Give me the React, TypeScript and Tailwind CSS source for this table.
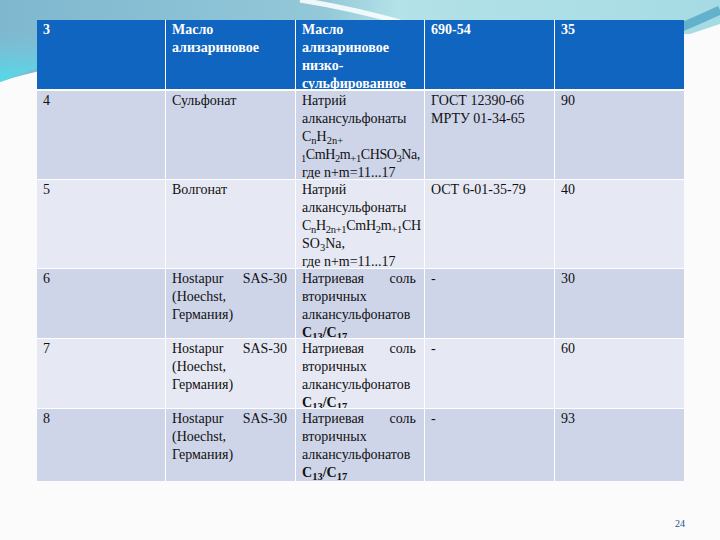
import React from "react";

const serif = { fontFamily: '"Liberation Serif", "Times New Roman", serif' };

const ODD = "bg-[#ced5e9]";
const EVEN = "bg-[#e6e9f3]";

const Cell = ({ children, className = "" }: { children?: React.ReactNode; className?: string }) => (
  <div className={`overflow-hidden pl-[6px] pr-[8px] pt-[1px] whitespace-nowrap ${className}`} style={serif}>
    {children}
  </div>
);

// line spread across the cell, like justified text
const Spread = ({ a, b }: { a: React.ReactNode; b: React.ReactNode }) => (
  <div className="flex justify-between">
    <span>{a}</span>
    <span>{b}</span>
  </div>
);

const hostapur = (
  <>
    <Spread a="Hostapur" b="SAS-30" />
    <div>(Hoechst,</div>
    <div>Германия)</div>
  </>
);

const salt = (
  <>
    <Spread a="Натриевая" b="соль" />
    <div>вторичных</div>
    <div>алкансульфонатов</div>
    <div className="font-bold">
      C<sub>13</sub>/C<sub>17</sub>
    </div>
  </>
);

const rows = [
  {
    h: "h-[89px]",
    bg: ODD,
    cells: [
      "4",
      "Сульфонат",
      <>
        <div>Натрий</div>
        <div>алкансульфонаты</div>
        <div>
          C<sub>n</sub>H<sub>2n+</sub>
        </div>
        <div className="tracking-[-0.4px] -ml-px">
          <sub>1</sub>CmH<sub>2</sub>m<sub>+1</sub>CHSO<sub>3</sub>Na,
        </div>
        <div>где n+m=11...17</div>
      </>,
      <>
        <div>ГОСТ 12390-66</div>
        <div>МРТУ 01-34-65</div>
      </>,
      "90",
    ],
  },
  {
    h: "h-[89px]",
    bg: EVEN,
    cells: [
      "5",
      "Волгонат",
      <>
        <div>Натрий</div>
        <div>алкансульфонаты</div>
        <div className="tracking-[-0.3px]">
          C<sub>n</sub>H<sub>2n+1</sub>CmH<sub>2</sub>m<sub>+1</sub>CH
        </div>
        <div>
          SO<sub>3</sub>Na,
        </div>
        <div>где n+m=11...17</div>
      </>,
      "ОСТ 6-01-35-79",
      "40",
    ],
  },
  { h: "h-[70px]", bg: ODD, cells: ["6", hostapur, salt, "-", "30"] },
  { h: "h-[70px]", bg: EVEN, cells: ["7", hostapur, salt, "-", "60"] },
  { h: "h-[72px]", bg: ODD, cells: ["8", hostapur, salt, "-", "93"] },
];

const cols = "grid grid-cols-[128px_129px_128px_129px_129px] gap-x-px";

export default function App() {
  return (
    <div className="relative w-[720px] h-[540px] overflow-hidden bg-[#fbfbfb]" style={serif}>
      <svg className="absolute inset-0" width="720" height="540" viewBox="0 0 720 540">
        <defs>
          <linearGradient id="band" x1="0" y1="0" x2="1" y2="0">
            <stop offset="0" stopColor="#7fb7cf" />
            <stop offset="0.45" stopColor="#93c8d8" />
            <stop offset="0.55" stopColor="#b3e2e8" />
            <stop offset="1" stopColor="#a6dbe3" />
          </linearGradient>
          <linearGradient id="cyan" x1="0" y1="0" x2="0" y2="1">
            <stop offset="0" stopColor="#6fcbe0" stopOpacity="0" />
            <stop offset="1" stopColor="#52dbe9" />
          </linearGradient>
        </defs>
        <path d="M0 0 H720 V24 L690 34 C420 40 120 40 0 82 Z" fill="url(#band)" />
        <path d="M0 30 H60 V60 L0 82 Z" fill="url(#cyan)" />
        <path d="M300 0 Q350 8 400 22" stroke="#ffffff" strokeWidth="5" fill="none" opacity="0.85" />
        <path d="M650 40 Q690 24 720 10" stroke="#62b2cc" strokeWidth="9" fill="none" />
      </svg>

      <div className="relative pt-[20px] pl-[37px] text-[14px] leading-[18px]">
        <div className="w-[647px] bg-white">
          {/* header row */}
          <div className={`${cols} h-[71px] border-b-2 border-white font-bold text-white`}>
            <Cell className="bg-[#1065c0]">3</Cell>
            <Cell className="bg-[#1065c0]">
              <div>Масло</div>
              <div>ализариновое</div>
            </Cell>
            <Cell className="bg-[#1065c0]">
              <div>Масло</div>
              <div>ализариновое</div>
              <div>низко-</div>
              <div>сульфированное</div>
            </Cell>
            <Cell className="bg-[#1065c0]">690-54</Cell>
            <Cell className="bg-[#1065c0]">35</Cell>
          </div>

          {rows.map((r, i) => (
            <div
              key={i}
              className={`${cols} ${r.h} text-[#111] ${i < rows.length - 1 ? "border-b border-white" : ""}`}
            >
              {r.cells.map((c, j) => (
                <Cell key={j} className={r.bg}>
                  {c}
                </Cell>
              ))}
            </div>
          ))}
        </div>
      </div>

      <div className="absolute left-[675px] top-[516px] text-[10px] text-[#1f4f8f]">24</div>
    </div>
  );
}
